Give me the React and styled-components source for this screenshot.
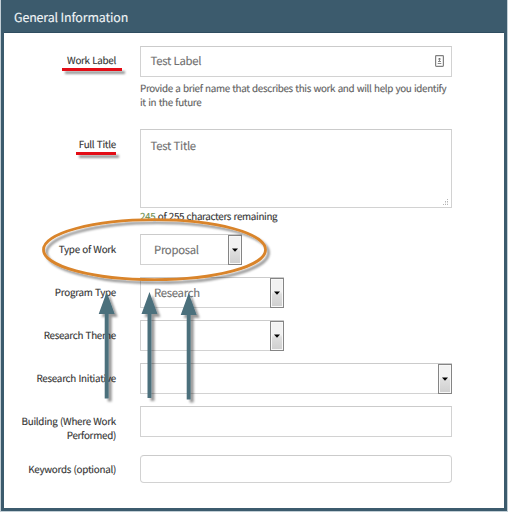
import React from "react";
import styled, { createGlobalStyle } from "styled-components";

const GlobalStyle = createGlobalStyle`
  * { box-sizing: border-box; }
  body {
    margin: 0;
    background: #fff;
    overflow: hidden;
    font-family: "Noto Sans CJK SC", "Noto Sans", sans-serif;
    text-rendering: geometricPrecision;
    -webkit-text-stroke: 0.12px currentColor;
  }
`;

const Page = styled.main`
  position: relative;
  width: 508px;
  height: 512px;
  padding: 0 1px 1px;
  background: #c3cfd6;
`;

const Panel = styled.section`
  height: 511px;
  background: #fff;
  border: 3px solid #3c5b6d;
  border-top: 0;
`;

const Header = styled.h1`
  display: flex;
  align-items: center;
  height: 33px;
  margin: 0;
  padding: 1px 0 0 10px;
  background: #3c5b6d;
  border-bottom: 1px solid #2f4d60;
  color: #f0f4f6;
  font-size: 12.4px;
  font-weight: 400;
  letter-spacing: -0.12px;
`;

const Form = styled.form`
  display: flex;
  flex-direction: column;
  padding-top: 13px;
`;

const Row = styled.div`
  display: grid;
  grid-template-columns: 112px 312px;
  column-gap: 24px;
  height: ${(p) => p.$height}px;
`;

const Label = styled.label`
  padding-top: ${(p) => p.$top ?? 8}px;
  text-align: right;
  color: #333;
  font-size: 9.8px;
  letter-spacing: -0.26px;
  word-spacing: 0.5px;
  line-height: 14.4px;
  white-space: pre-line;
`;

const Field = styled.div`
  display: flex;
  align-items: ${(p) => (p.$tall ? "flex-start" : "center")};
  justify-content: space-between;
  position: relative;
  width: ${(p) => p.$width || 312}px;
  height: ${(p) => p.$height || 31}px;
  padding: ${(p) => (p.$tall ? "8px 7px 0 9.5px" : "0 7px 1px 9.5px")};
  border: 1px solid #d2d2d2;
  border-top-color: #cbcbcb;
  border-radius: ${(p) => p.$radius || 0}px;
  color: #707070;
  font-size: 11.3px;
  letter-spacing: -0.27px;
  word-spacing: 0.4px;
  line-height: 16px;
`;

const Select = styled(Field)`
  padding: 0 0 0 13px;
`;

const DropButton = styled.span`
  display: flex;
  align-items: center;
  justify-content: center;
  width: 14px;
  height: 30px;
  margin-right: -1px;
  border: 1px solid #858585;
  box-shadow: inset 0 0 0 1px #f8f8f8;
  background: linear-gradient(#f2f2f2 0 45%, #dedede 55%, #cfcfcf);
`;

const Hint = styled.p`
  margin: 4px 0 0;
  color: #606060;
  font-size: 9.8px;
  letter-spacing: -0.32px;
  word-spacing: 0.6px;
  line-height: 14.4px;
  white-space: pre;
`;

const Counter = styled(Hint)`
  margin-top: 0.5px;
  color: #333;
`;

const Count = styled.span`
  color: #6f8f50;
`;

const Grip = styled.svg`
  position: absolute;
  right: 2px;
  bottom: 1px;
`;

const Annotations = styled.svg`
  position: absolute;
  inset: 0;
  pointer-events: none;
`;

function Dropdown({ width, value }) {
  return (
    <Select $width={width}>
      <span>{value}</span>
      <DropButton>
        <svg width="6" height="4" viewBox="0 0 6 4">
          <path d="M0 0.5H6L3 3.8Z" fill="#000" />
        </svg>
      </DropButton>
    </Select>
  );
}

function CardIcon() {
  return (
    <svg width="9" height="12" viewBox="0 0 9 12">
      <rect x="0.6" y="0.6" width="7.8" height="10.8" rx="0.8" fill="#fff" stroke="#808080" strokeWidth="1.2" />
      <circle cx="4.5" cy="4" r="1.1" fill="#666" />
      <path d="M4.5 4V7M3 6.5H6M2.7 8.5H6.3" stroke="#888" strokeWidth="1" />
    </svg>
  );
}

function ResizeGrip() {
  return (
    <Grip width="7" height="7" viewBox="0 0 7 7" fill="#b5b5b5">
      <path d="M5 0h1v1H5zM5 2h1v1H5zM3 2h1v1H3zM5 5h1v1H5zM3 5h1v1H3zM1 5h1v1H1zM5 3.5h1v.7H5zM3 3.5h1v.7H3z" />
    </Grip>
  );
}

function Arrow({ x, tip, end }) {
  return (
    <path
      d={`M${x} ${tip}L${x + 8} ${tip + 22}H${x + 2}V${end}H${x - 2}V${tip + 22}H${x - 8}Z`}
      fill="#4c6f7c"
    />
  );
}

export default function App() {
  return (
    <>
      <GlobalStyle />
      <Page>
        <Panel>
          <Header>General Information</Header>
          <Form>
            <Row $height={83}>
              <Label $top={7}>Work Label</Label>
              <div>
                <Field>
                  <span>Test Label</span>
                  <CardIcon />
                </Field>
                <Hint>{"Provide a brief name that describes this work and will help you identify\nit in the future"}</Hint>
              </div>
            </Row>
            <Row $height={105}>
              <Label>Full Title</Label>
              <div>
                <Field $tall $height={79}>
                  <span>Test Title</span>
                  <ResizeGrip />
                </Field>
                <Counter>
                  <Count>245</Count> of 255 characters remaining
                </Counter>
              </div>
            </Row>
            <Row $height={43}>
              <Label>Type of Work</Label>
              <Dropdown width={102} value="Proposal" />
            </Row>
            <Row $height={43}>
              <Label>Program Type</Label>
              <Dropdown width={144} value="Research" />
            </Row>
            <Row $height={43}>
              <Label>Research Theme</Label>
              <Dropdown width={144} value="" />
            </Row>
            <Row $height={43}>
              <Label>Research Initiative</Label>
              <Dropdown width={312} value="" />
            </Row>
            <Row $height={49}>
              <Label>{"Building (Where Work\nPerformed)"}</Label>
              <Field />
            </Row>
            <Row $height={28}>
              <Label $top={7}>Keywords (optional)</Label>
              <Field $height={28} $radius={4} />
            </Row>
          </Form>
        </Panel>
        <Annotations width="508" height="512" viewBox="0 0 508 512">
          <defs>
            <filter id="shadow" x="0" y="0" width="508" height="512" filterUnits="userSpaceOnUse">
              <feDropShadow dx="3" dy="3" stdDeviation="1.2" floodColor="#000" floodOpacity="0.4" />
            </filter>
          </defs>
          <g filter="url(#shadow)">
            <path d="M62 69.5H122M76 153.5H116" stroke="#e30b13" strokeWidth="3" />
            <ellipse cx="154.5" cy="249.7" rx="111" ry="30" fill="none" stroke="#d9842b" strokeWidth="2.8" />
            <Arrow x={106.7} tip={292} end={398.5} />
            <Arrow x={149.5} tip={292} end={398} />
            <Arrow x={188.7} tip={293} end={399.5} />
          </g>
        </Annotations>
      </Page>
    </>
  );
}
